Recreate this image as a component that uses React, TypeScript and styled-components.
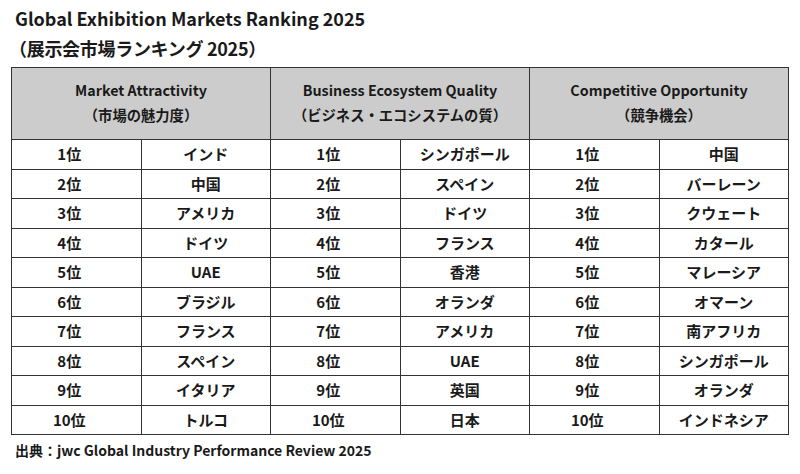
import styled, { createGlobalStyle } from 'styled-components';

const GlobalStyle = createGlobalStyle`
  body {
    margin: 0;
    background: #ffffff;
    font-family: "Noto Sans CJK JP", "Noto Sans", sans-serif;
    color: #1a1a1a;
  }
`;

const Page = styled.div`
  width: 800px;
  height: 474px;
  padding: 4px 11px 0 11px;
  box-sizing: border-box;
`;

const Title = styled.h1`
  margin: 0 0 0 4px;
  font-size: 18px;
  font-weight: 700;
  line-height: 28px;
`;

const SubTitle = styled.div`
  margin: 0 0 3px -2px;
  font-size: 18px;
  font-weight: 700;
  line-height: 32px;
  letter-spacing: -0.3px;
`;

const Table = styled.table`
  width: 778px;
  border-collapse: collapse;
  table-layout: fixed;
  font-size: 15px;
  font-weight: 700;
`;

const HeadCell = styled.th`
  height: 68px;
  background: #cccccc;
  border: 1.5px solid #333333;
  font-size: 14.3px;
  font-weight: 700;
  line-height: 25px;
  padding: 0 0 3px 0;
  vertical-align: middle;
`;

const Cell = styled.td<{ $rank?: boolean }>`
  height: 28.5px;
  border: 1.5px solid #333333;
  text-align: center;
  padding: 0 ${(p) => (p.$rank ? '14px' : '0')} 0 0;
  line-height: 20px;
`;

const Source = styled.div`
  margin: 3px 0 0 4px;
  font-size: 14px;
  font-weight: 700;
  line-height: 24px;
`;

interface Group {
  en: string;
  ja: string;
  items: string[];
}

const groups: Group[] = [
  {
    en: 'Market Attractivity',
    ja: '（市場の魅力度）',
    items: ['インド', '中国', 'アメリカ', 'ドイツ', 'UAE', 'ブラジル', 'フランス', 'スペイン', 'イタリア', 'トルコ'],
  },
  {
    en: 'Business Ecosystem Quality',
    ja: '（ビジネス・エコシステムの質）',
    items: ['シンガポール', 'スペイン', 'ドイツ', 'フランス', '香港', 'オランダ', 'アメリカ', 'UAE', '英国', '日本'],
  },
  {
    en: 'Competitive Opportunity',
    ja: '（競争機会）',
    items: ['中国', 'バーレーン', 'クウェート', 'カタール', 'マレーシア', 'オマーン', '南アフリカ', 'シンガポール', 'オランダ', 'インドネシア'],
  },
];

const ranks = Array.from({ length: 10 }, (_, i) => i + 1);

export default function App() {
  return (
    <Page>
      <GlobalStyle />
      <Title>Global Exhibition Markets Ranking 2025</Title>
      <SubTitle>（展示会市場ランキング 2025）</SubTitle>
      <Table>
        <thead>
          <tr>
            {groups.map((g) => (
              <HeadCell key={g.en} colSpan={2}>
                {g.en}
                <br />
                {g.ja}
              </HeadCell>
            ))}
          </tr>
        </thead>
        <tbody>
          {ranks.map((r) => (
            <tr key={r}>
              {groups.map((g) => [
                <Cell key={g.en + 'r'} $rank>{r}位</Cell>,
                <Cell key={g.en + 'n'}>{g.items[r - 1]}</Cell>,
              ])}
            </tr>
          ))}
        </tbody>
      </Table>
      <Source>出典：jwc Global Industry Performance Review 2025</Source>
    </Page>
  );
}
